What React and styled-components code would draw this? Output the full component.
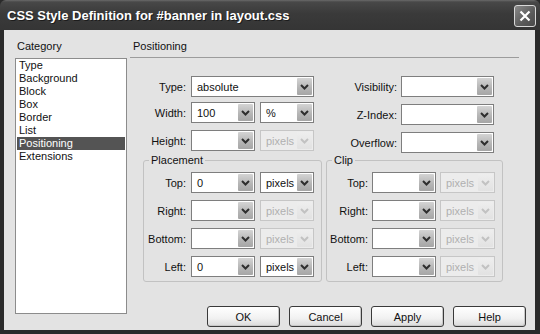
import styled, { createGlobalStyle } from "styled-components";

const GlobalStyle = createGlobalStyle`
  html, body {
    margin: 0;
    padding: 0;
  }
  body {
    width: 540px;
    height: 334px;
    overflow: hidden;
    background: #2b2b2b;
    font-family: "Liberation Sans", Arial, sans-serif;
  }
`;

const Window = styled.div`
  width: 540px;
  height: 334px;
  display: flex;
  flex-direction: column;
  background: #2a2a2a;
  font-size: 11px;
  color: #111;
`;

const TitleBar = styled.div`
  height: 30px;
  flex: none;
  display: flex;
  align-items: flex-start;
  justify-content: space-between;
  padding: 0 4px 0 7px;
  box-sizing: border-box;
  background: linear-gradient(#6a6a6a 0, #484848 2px, #3a3a3a 45%, #353535 100%);
  border-radius: 6px 6px 0 0;
  & > .title {
    margin-top: 8px;
    color: #fff;
    font-weight: bold;
    font-size: 13px;
    line-height: 15px;
    text-shadow: 1px 1px 0 #1c1c1c;
  }
`;

const CloseButton = styled.div`
  margin-top: 5px;
  width: 22px;
  height: 22px;
  box-sizing: border-box;
  border: 1px solid #d8d8d8;
  border-radius: 3px;
  background: linear-gradient(135deg, #8a8a8a, #5a5a5a 60%, #4a4a4a);
  display: flex;
  align-items: center;
  justify-content: center;
`;

const Body = styled.div`
  flex: 1;
  margin: 0 5px 4px 4px;
  background: #e3e3e3;
  display: flex;
`;

const CategoryColumn = styled.div`
  width: 112px;
  margin-left: 11px;
  padding-top: 10px;
  display: flex;
  flex-direction: column;
`;

const Caption = styled.div`
  line-height: 13px;
  padding-left: 2px;
  margin-bottom: 5px;
`;

const ListBox = styled.div`
  height: 256px;
  box-sizing: border-box;
  border: 1px solid #8c8c8c;
  background: #fff;
  padding: 0 1px;
`;

const ListItem = styled.div`
  line-height: 13px;
  padding-left: 2px;
  background: ${(p) => (p.$selected ? "#545454" : "transparent")};
  color: ${(p) => (p.$selected ? "#fff" : "#111")};
`;

const Panel = styled.div`
  flex: 1;
  margin-left: 3px;
  padding: 10px 9px 3px 0;
  display: flex;
  flex-direction: column;
`;

const SectionHeader = styled.div`
  line-height: 13px;
  padding: 0 0 4px 3px;
  margin-right: 7px;
  border-bottom: 1px solid #9c9c9c;
`;

const TopForm = styled.div`
  display: flex;
  margin-top: 18px;
  padding-left: 10px;
  gap: 27px;
`;

const FormColumn = styled.div`
  display: flex;
  flex-direction: column;
`;

const FieldRow = styled.div`
  display: flex;
  align-items: center;
  margin-top: ${(p) => p.$top || 0}px;
`;

const Label = styled.div`
  width: ${(p) => p.$w}px;
  margin-right: ${(p) => p.$gap}px;
  text-align: right;
  white-space: nowrap;
`;

const SelectBox = styled.div`
  width: ${(p) => p.$w}px;
  height: 21px;
  margin-left: ${(p) => p.$ml || 0}px;
  box-sizing: border-box;
  border: 1px solid ${(p) => (p.$disabled ? "#c6c6c6" : "#7e7e7e")};
  background: ${(p) => (p.$disabled ? "#ececec" : "#fff")};
  color: ${(p) => (p.$disabled ? "#b0b0b0" : "#111")};
  display: flex;
  align-items: center;
  padding: 1px;
  & > span {
    flex: 1;
    padding-left: 4px;
    white-space: nowrap;
    overflow: hidden;
  }
`;

const ArrowBox = styled.div`
  width: 15px;
  height: 17px;
  flex: none;
  display: flex;
  align-items: center;
  justify-content: center;
  background: ${(p) =>
    p.$disabled
      ? "linear-gradient(#eeeeee, #e2e2e2)"
      : "linear-gradient(#d4d4d4, #b4b4b4 60%, #a6a6a6)"};
  border-radius: 1px;
`;

const FieldsetRow = styled.div`
  display: flex;
  margin-left: 13px;
  margin-top: 1px;
  gap: 4px;
`;

const Fieldset = styled.fieldset`
  width: ${(p) => p.$w}px;
  box-sizing: border-box;
  margin: 0;
  padding: 5px 0 4px 0;
  border: 1px solid #c2c2c2;
  border-radius: 3px;
  display: flex;
  flex-direction: column;
  gap: 7px;
  & > legend {
    padding: 0 2px;
    margin-left: 5px;
    line-height: 13px;
  }
`;

const ButtonBar = styled.div`
  margin-top: auto;
  display: flex;
  justify-content: flex-end;
  gap: 9px;
`;

const Button = styled.button`
  width: 73px;
  height: 21px;
  box-sizing: border-box;
  border: 1px solid #3a3a3a;
  border-radius: 3px;
  background: linear-gradient(#ffffff, #f1f1f1 60%, #dadada);
  box-shadow: inset -1px -1px 0 #c8c8c8;
  font-family: "Liberation Sans", Arial, sans-serif;
  font-size: 11px;
  color: #111;
  padding: 0;
`;

const Chevron = ({ disabled }) => (
  <svg width="9" height="6" viewBox="0 0 9 6">
    <polyline
      points="1,1 4.5,4.5 8,1"
      fill="none"
      stroke={disabled ? "#c2c2c2" : "#2e2e2e"}
      strokeWidth="2"
    />
  </svg>
);

const Select = ({ w, value, disabled, ml }) => (
  <SelectBox $w={w} $disabled={disabled} $ml={ml}>
    <span>{value}</span>
    <ArrowBox $disabled={disabled}>
      <Chevron disabled={disabled} />
    </ArrowBox>
  </SelectBox>
);

const categories = [
  "Type",
  "Background",
  "Block",
  "Box",
  "Border",
  "List",
  "Positioning",
  "Extensions",
];

const placement = [
  { name: "Top", value: "0", unit: true },
  { name: "Right", value: "", unit: false },
  { name: "Bottom", value: "", unit: false },
  { name: "Left", value: "0", unit: true },
];

const clip = ["Top", "Right", "Bottom", "Left"];

const App = () => {
  return (
    <Window>
      <GlobalStyle />
      <TitleBar>
        <div className="title">CSS Style Definition for #banner in layout.css</div>
        <CloseButton>
          <svg width="12" height="12" viewBox="0 0 12 12">
            <path d="M1.5 1.5 L10.5 10.5 M10.5 1.5 L1.5 10.5" stroke="#fff" strokeWidth="2.2" />
          </svg>
        </CloseButton>
      </TitleBar>
      <Body>
        <CategoryColumn>
          <Caption>Category</Caption>
          <ListBox>
            {categories.map((c) => (
              <ListItem key={c} $selected={c === "Positioning"}>
                {c}
              </ListItem>
            ))}
          </ListBox>
        </CategoryColumn>
        <Panel>
          <SectionHeader>Positioning</SectionHeader>
          <TopForm>
            <FormColumn>
              <FieldRow>
                <Label $w={46} $gap={5}>Type:</Label>
                <Select w={123} value="absolute" />
              </FieldRow>
              <FieldRow $top={5}>
                <Label $w={46} $gap={5}>Width:</Label>
                <Select w={64} value="100" />
                <Select w={54} value="%" ml={5} />
              </FieldRow>
              <FieldRow $top={7}>
                <Label $w={46} $gap={5}>Height:</Label>
                <Select w={64} value="" />
                <Select w={54} value="pixels" ml={5} disabled />
              </FieldRow>
            </FormColumn>
            <FormColumn>
              <FieldRow>
                <Label $w={56} $gap={4}>Visibility:</Label>
                <Select w={93} value="" />
              </FieldRow>
              <FieldRow $top={7}>
                <Label $w={56} $gap={4}>Z-Index:</Label>
                <Select w={93} value="" />
              </FieldRow>
              <FieldRow $top={7}>
                <Label $w={56} $gap={4}>Overflow:</Label>
                <Select w={93} value="" />
              </FieldRow>
            </FormColumn>
          </TopForm>
          <FieldsetRow>
            <Fieldset $w={179}>
              <legend>Placement</legend>
              {placement.map((p) => (
                <FieldRow key={p.name}>
                  <Label $w={42} $gap={5}>{p.name}:</Label>
                  <Select w={64} value={p.value} />
                  <Select w={54} value="pixels" ml={5} disabled={!p.unit} />
                </FieldRow>
              ))}
            </Fieldset>
            <Fieldset $w={177}>
              <legend>Clip</legend>
              {clip.map((name) => (
                <FieldRow key={name}>
                  <Label $w={41} $gap={4}>{name}:</Label>
                  <Select w={64} value="" />
                  <Select w={55} value="pixels" ml={4} disabled />
                </FieldRow>
              ))}
            </Fieldset>
          </FieldsetRow>
          <ButtonBar>
            <Button>OK</Button>
            <Button>Cancel</Button>
            <Button>Apply</Button>
            <Button>Help</Button>
          </ButtonBar>
        </Panel>
      </Body>
    </Window>
  );
};

export default App;
